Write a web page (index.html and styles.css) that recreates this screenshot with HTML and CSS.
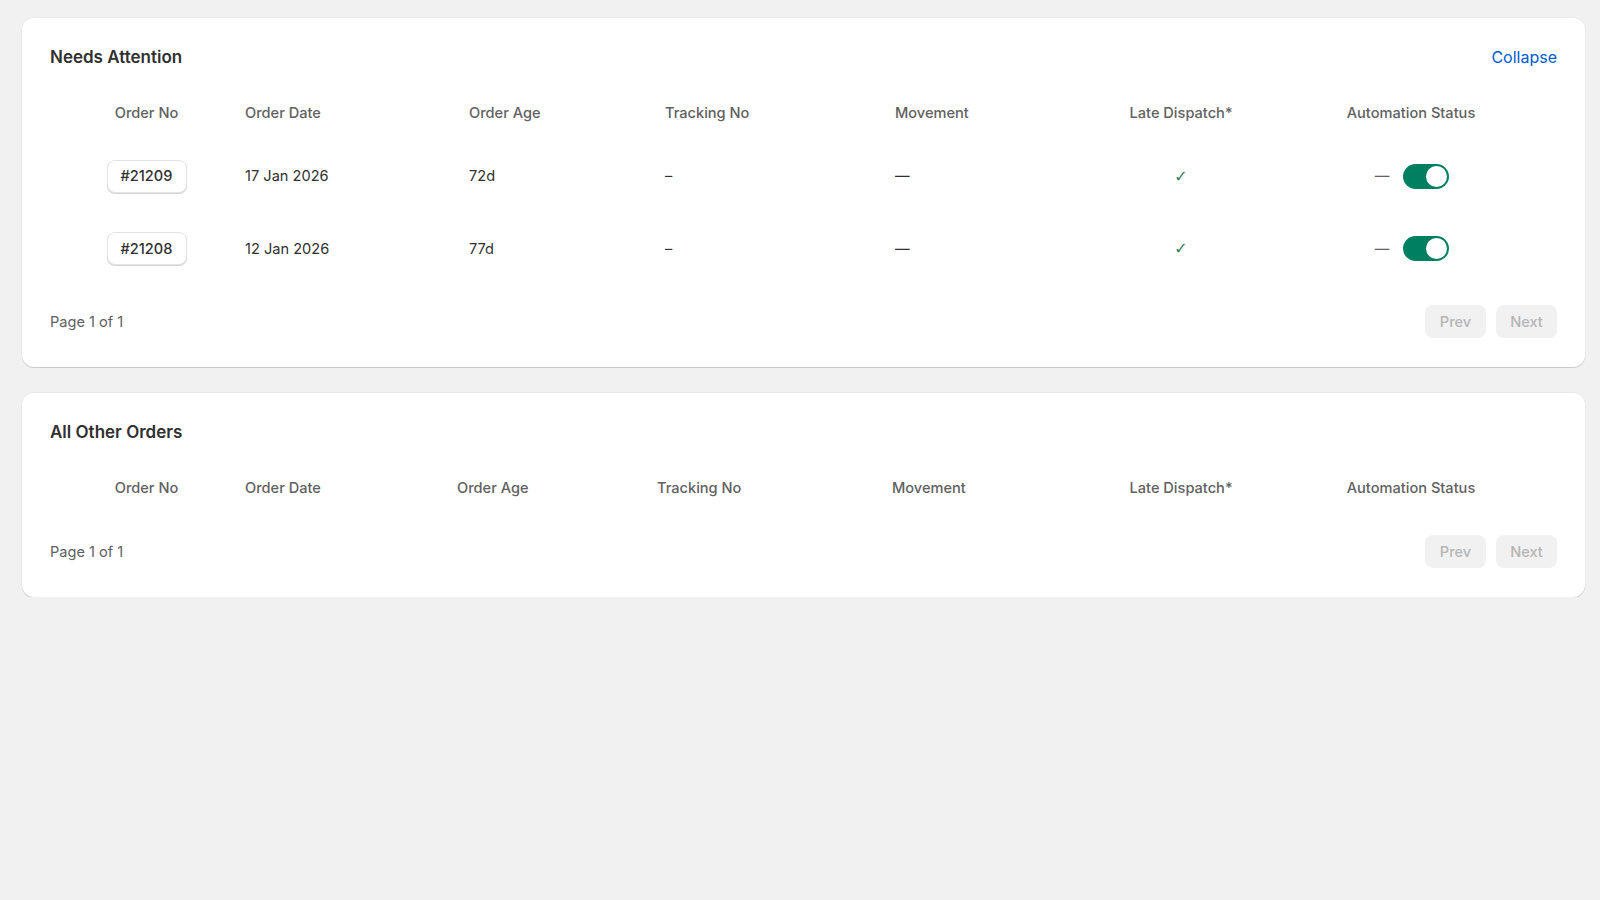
FILE: index.html
```html
<!DOCTYPE html>
<html lang="en">
<head>
    <meta charset="UTF-8">
    <meta name="viewport" content="width=device-width, initial-scale=1.0">
    <title>Orders</title>
    <link rel="stylesheet" href="styles.css">
</head>
<body>
    <div class="page">
        <div class="card">
            <div class="card_head">
                <h2>Needs Attention</h2>
                <a href="#" class="link">Collapse</a>
            </div>
            <table class="orders attention">
                <colgroup>
                    <col class="c_no"><col class="c_date"><col class="c_age"><col class="c_track">
                    <col class="c_move"><col class="c_late"><col class="c_auto">
                </colgroup>
                <thead>
                    <tr>
                        <th class="center">Order No</th>
                        <th>Order Date</th>
                        <th>Order Age</th>
                        <th>Tracking No</th>
                        <th>Movement</th>
                        <th class="center">Late Dispatch*</th>
                        <th class="center">Automation Status</th>
                    </tr>
                </thead>
                <tbody>
                    <tr>
                        <td class="center"><button class="order_btn">#21209</button></td>
                        <td>17 Jan 2026</td>
                        <td>72d</td>
                        <td>–</td>
                        <td>—</td>
                        <td class="center check">✓</td>
                        <td class="center">
                            <div class="auto"><span class="auto_dash">—</span><span class="toggle on"><span class="knob"></span></span></div>
                        </td>
                    </tr>
                    <tr>
                        <td class="center"><button class="order_btn">#21208</button></td>
                        <td>12 Jan 2026</td>
                        <td>77d</td>
                        <td>–</td>
                        <td>—</td>
                        <td class="center check">✓</td>
                        <td class="center">
                            <div class="auto"><span class="auto_dash">—</span><span class="toggle on"><span class="knob"></span></span></div>
                        </td>
                    </tr>
                </tbody>
            </table>
            <div class="card_foot">
                <span class="page_info">Page 1 of 1</span>
                <div class="pager">
                    <button class="pager_btn" disabled>Prev</button>
                    <button class="pager_btn" disabled>Next</button>
                </div>
            </div>
        </div>

        <div class="card">
            <div class="card_head">
                <h2>All Other Orders</h2>
            </div>
            <table class="orders others">
                <colgroup>
                    <col class="c_no"><col class="c_date"><col class="c_age"><col class="c_track">
                    <col class="c_move"><col class="c_late"><col class="c_auto">
                </colgroup>
                <thead>
                    <tr>
                        <th class="center">Order No</th>
                        <th>Order Date</th>
                        <th>Order Age</th>
                        <th>Tracking No</th>
                        <th>Movement</th>
                        <th class="center">Late Dispatch*</th>
                        <th class="center">Automation Status</th>
                    </tr>
                </thead>
                <tbody></tbody>
            </table>
            <div class="card_foot">
                <span class="page_info">Page 1 of 1</span>
                <div class="pager">
                    <button class="pager_btn" disabled>Prev</button>
                    <button class="pager_btn" disabled>Next</button>
                </div>
            </div>
        </div>
    </div>
</body>
</html>
```

FILE: styles.css
```css
html, body {
    margin: 0;
    padding: 0;
    background: #f1f1f1;
    font-family: Inter, "Noto Sans", sans-serif;
    color: #303030;
}
.page {
    display: flex;
    flex-direction: column;
    gap: 26px;
    padding: 18px 15px 0 22px;
}
.card {
    background: #fff;
    border-radius: 12px;
    box-shadow: 0 1px 0 rgba(0, 0, 0, 0.13), 0 0 0 1px rgba(0, 0, 0, 0.03);
    padding: 28px 28px 29px;
}
.card_head {
    display: flex;
    justify-content: space-between;
    align-items: center;
    height: 22px;
    margin-bottom: 18px;
}
.card_head h2 {
    margin: 0;
    font-size: 17px;
    font-weight: 600;
    color: #303030;
}
.link {
    color: #005bd3;
    font-size: 16px;
    text-decoration: none;
}

/* table */
.orders {
    width: 100%;
    table-layout: fixed;
    border-collapse: collapse;
    font-size: 14.6px;
}
.orders th {
    height: 54px;
    padding: 0 12px;
    text-align: left;
    font-weight: 500;
    color: #616161;
}
.orders td {
    height: 72.5px;
    padding: 0 12px;
    text-align: left;
    color: #303030;
}
.orders .center {
    text-align: center;
}
.orders th:first-child,
.orders td:first-child {
    padding-left: 22px;
}
.c_no { width: 183px; }
.c_late { width: 168px; }
.c_auto { width: 292px; }
.attention .c_date { width: 224px; }
.attention .c_age { width: 196px; }
.attention .c_track { width: 230px; }
.attention .c_move { width: 214px; }
.others .c_date { width: 212px; }
.others .c_age { width: 200px; }
.others .c_track { width: 235px; }
.others .c_move { width: 217px; }

.orders .check {
    font-family: "DejaVu Sans", sans-serif;
    font-size: 16px;
    color: #3b7a69;
}
.order_btn {
    width: 80px;
    height: 33px;
    background: #fff;
    border: 1px solid #e3e3e3;
    border-radius: 8px;
    box-shadow: 0 1px 0 #d4d4d4;
    font-family: inherit;
    font-size: 14.6px;
    font-weight: 500;
    color: #303030;
    cursor: pointer;
}
.auto {
    display: inline-flex;
    align-items: center;
    gap: 14px;
    vertical-align: middle;
    margin-left: 2px;
}
.auto_dash {
    color: #616161;
}
.toggle {
    display: flex;
    align-items: center;
    justify-content: flex-end;
    width: 46px;
    height: 25px;
    box-sizing: border-box;
    padding: 2px;
    border-radius: 13px;
    background: #c9c9c9;
}
.toggle.on {
    background: #008060;
}
.knob {
    width: 21px;
    height: 21px;
    border-radius: 50%;
    background: #fff;
}

/* footer */
.card_foot {
    display: flex;
    justify-content: space-between;
    align-items: center;
    margin-top: 20px;
}
.page_info {
    font-size: 14.6px;
    color: #616161;
}
.pager {
    display: flex;
    gap: 10px;
}
.pager_btn {
    width: 61px;
    height: 33px;
    border: none;
    border-radius: 8px;
    background: #f1f1f1;
    color: #b5b5b5;
    font-family: inherit;
    font-size: 14.6px;
    font-weight: 500;
}
```
